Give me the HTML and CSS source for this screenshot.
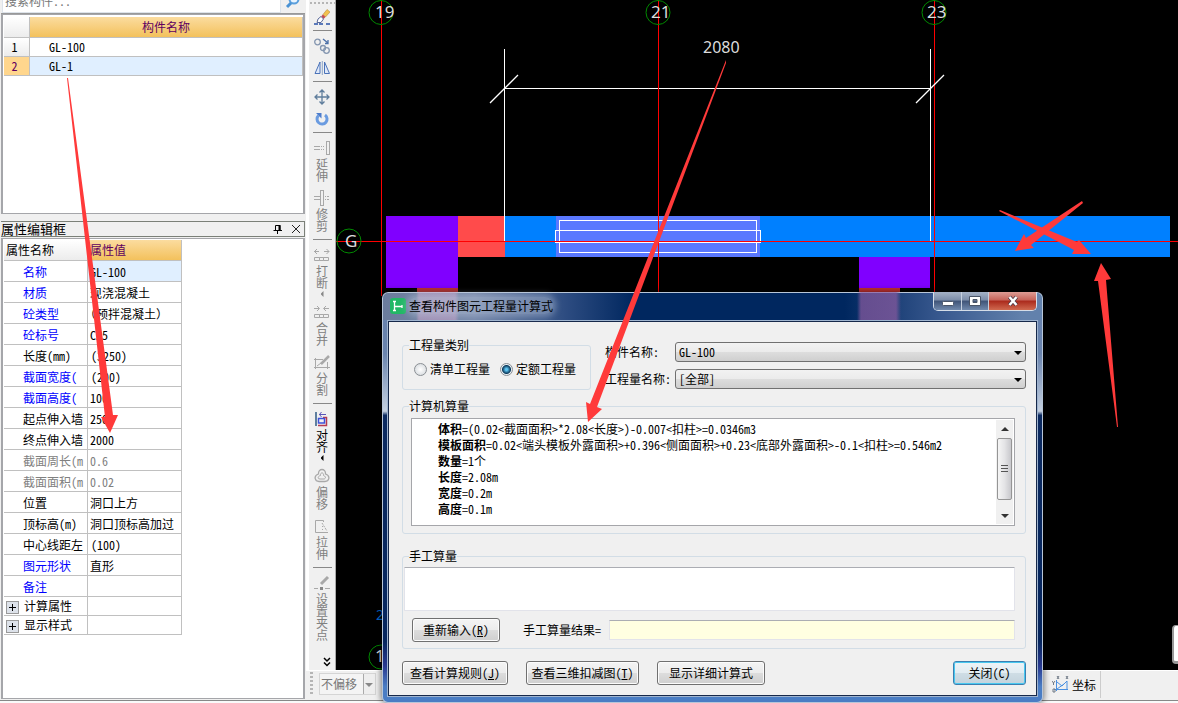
FILE: index.html
```html
<!DOCTYPE html>
<html lang="zh-CN">
<head>
<meta charset="utf-8">
<title>构件图元工程量</title>
<link rel="stylesheet" href="styles.css">
</head>
<body>
<div class="app">
  <aside class="side">
    <div class="search">
      <input class="search-input" type="text" placeholder="搜索构件..." aria-label="搜索构件">
      <button class="search-btn" type="button" aria-label="搜索">
        <svg width="16" height="16" viewBox="0 0 16 16"><circle cx="9" cy="6" r="4.5" fill="#e8f4ff" stroke="#5a9fdc" stroke-width="2"/><path d="M6 10 L2 14" stroke="#4a92d4" stroke-width="3"/></svg>
      </button>
    </div>
    <div class="list-box">
      <table class="members">
        <thead><tr><th class="num"></th><th class="gold">构件名称</th></tr></thead>
        <tbody>
          <tr><td class="num">1</td><td>GL-100</td></tr>
          <tr class="picked"><td class="num">2</td><td>GL-1</td></tr>
        </tbody>
      </table>
    </div>
    <div class="panel-title">
      <h2>属性编辑框</h2>
      <button type="button" aria-label="固定"><svg width="10" height="10" viewBox="0 0 10 10"><path d="M2.500 6 V1.500 H7 V6 M0.500 6.500 H9 M4.500 7 V10" fill="none" stroke="#000"/><path d="M6.500 1 V6" stroke="#000" stroke-width="2"/></svg></button>
      <button type="button" aria-label="关闭面板"><svg width="10" height="10" viewBox="0 0 10 10"><path d="M1 1 L9 9 M9 1 L1 9" fill="none" stroke="#222"/></svg></button>
    </div>
    <div class="props-box">
      <table class="props">
        <thead><tr><th class="name">属性名称</th><th class="gold">属性值</th></tr></thead>
        <tbody>
          <tr class="key picked"><td>名称</td><td>GL-100</td></tr>
          <tr class="key"><td>材质</td><td>现浇混凝土</td></tr>
          <tr class="key"><td>砼类型</td><td class="wide-paren">（预拌混凝土）</td></tr>
          <tr class="key"><td>砼标号</td><td>C25</td></tr>
          <tr><td>长度(mm)</td><td class="paren">(3250)</td></tr>
          <tr class="key"><td>截面宽度(</td><td class="paren">(200)</td></tr>
          <tr class="key"><td>截面高度(</td><td>100</td></tr>
          <tr><td>起点伸入墙</td><td>250</td></tr>
          <tr><td>终点伸入墙</td><td>2000</td></tr>
          <tr class="dim"><td>截面周长(m</td><td>0.6</td></tr>
          <tr class="dim"><td>截面面积(m</td><td>0.02</td></tr>
          <tr><td>位置</td><td>洞口上方</td></tr>
          <tr><td>顶标高(m)</td><td>洞口顶标高加过</td></tr>
          <tr><td>中心线距左</td><td class="paren">(100)</td></tr>
          <tr class="key"><td>图元形状</td><td>直形</td></tr>
          <tr class="key"><td>备注</td><td></td></tr>
          <tr class="fold"><td><button type="button" aria-label="展开计算属性"></button>计算属性</td><td></td></tr>
          <tr class="fold"><td><button type="button" aria-label="展开显示样式"></button>显示样式</td><td></td></tr>
        </tbody>
      </table>
    </div>
  </aside>

  <nav class="tools" aria-label="修改工具">
    <div class="grip"></div>
    <button type="button" aria-label="格式刷"><svg width="16" height="16" viewBox="0 0 16 16"><path d="M9 5.500 L13 .5 L16 3 L11.500 8Z" fill="#f2c14e" stroke="#b98b3c" stroke-width=".6"/><path d="M7 7.500 L9 5.500 L11.500 8 L9.500 10Z" fill="#c44a52"/><path d="M4 10 L7 7.500 L9.500 10 L7 13.500 L3 13.500Z" fill="#fff" stroke="#5b6a9a"/><path d="M0 15 H4 M5 15 H9 M12 15 H16" stroke="#5b7aba" stroke-width="2"/></svg></button>
    <hr>
    <button type="button" aria-label="复制"><svg width="16" height="16" viewBox="0 0 16 16" fill="none" stroke="#8496b0" stroke-width="1.300"><circle cx="3.500" cy="4" r="2.800"/><circle cx="9" cy="10" r="2.500"/><circle cx="12.500" cy="12.500" r="2.800"/><path d="M9 1 L14 5 M14 2 V5.500 H11" stroke="#4a6fa8"/></svg></button>
    <button type="button" aria-label="镜像"><svg width="16" height="16" viewBox="0 0 16 16" fill="#dfe9fa" stroke="#4a72b8"><path d="M6 2 V13.500 H1Z M10.500 2 V13.500 H15.500Z"/><path d="M8.300 1 V15" stroke="#8ea5c8"/></svg></button>
    <hr>
    <button type="button" aria-label="移动"><svg width="16" height="16" viewBox="0 0 16 16" fill="none" stroke="#5f7d9c" stroke-width="1.300"><path d="M8 1 V15 M1 8 H15 M5.500 3.500 L8 1 L10.500 3.500 M5.500 12.500 L8 15 L10.500 12.500 M3.500 5.500 L1 8 L3.500 10.500 M12.500 5.500 L15 8 L12.500 10.500"/></svg></button>
    <button type="button" aria-label="旋转"><svg width="16" height="16" viewBox="0 0 16 16" fill="none"><path d="M4.500 4.500 A5 5 0 1 0 11 4" stroke="#6a9be0" stroke-width="3"/><path d="M2 2 H7.500 V7.500Z" fill="#4c7ccc"/></svg></button>
    <hr>
    <button type="button" class="off"><svg width="16" height="16" viewBox="0 0 16 16" fill="none" stroke="#a8a8a8"><path d="M0 6.500 H6 M0 9.500 H6 M7 6.500 H8 M9 6.500 H10 M7 9.500 H8 M9 9.500 H10"/><rect x="12.500" y="1.500" width="3" height="13"/></svg><span>延伸</span></button>
    <button type="button" class="off"><svg width="16" height="16" viewBox="0 0 16 16" fill="none" stroke="#a8a8a8"><path d="M0 6.500 H6 M0 9.500 H6 M11 6.500 H12 M13 6.500 H15 M11 9.500 H12 M13 9.500 H15"/><path d="M6.500 0 V15.500 M9.500 0 V15.500 M6 .5 H10 M6 15.500 H10"/></svg><span>修剪</span></button>
    <hr>
    <button type="button" class="off"><svg width="16" height="16" viewBox="0 0 16 16" fill="none" stroke="#a8a8a8"><path d="M0 4.500 H5 M3 2 L.5 4.500 L3 7 M10 4.500 H15 M12.500 2 L15 4.500 L12.500 7"/><path d="M.5 10.500 H5.500 V13.500 H.5Z M5.500 10.500 H9.500 V13.500 H5.500Z M9.500 10.500 H14.500 V13.500 H9.500Z"/></svg><span>打断</span><i class="more"></i></button>
    <button type="button" class="off"><svg width="16" height="16" viewBox="0 0 16 16" fill="none" stroke="#a8a8a8"><path d="M0 4.500 H5 M3 2 L5.500 4.500 L3 7 M10 4.500 H15 M12 2 L9.500 4.500 L12 7"/><path d="M.5 10.500 H5.500 V13.500 H.5Z M5.500 10.500 H9.500 V13.500 H5.500Z M9.500 10.500 H14.500 V13.500 H9.500Z"/></svg><span>合并</span></button>
    <button type="button" class="off"><svg width="16" height="16" viewBox="0 0 16 16" fill="none" stroke="#a8a8a8"><path d="M0 5.500 H9 M0 13.500 H16 M1.500 4 V15 M13.500 8 V15"/><path d="M7 10 L15 2" stroke-width="2.500"/><path d="M3 12 L7 9"/></svg><span>分割</span></button>
    <hr>
    <button type="button"><svg width="16" height="16" viewBox="0 0 16 16" fill="none"><path d="M2 1 V15" stroke="#5e7f9f" stroke-width="2"/><path d="M5 3.500 H12 M7.500 1 L5.500 3.500 L7.500 6" stroke="#5a55b8"/><path d="M9 6.500 H12.500 V14.500 H4" stroke="#b43a50" stroke-width="1.500"/><rect x="4.500" y="7.500" width="6" height="4.500" stroke="#3c50d8" stroke-width="1.500"/></svg><span>对齐</span><i class="more"></i></button>
    <button type="button" class="off"><svg width="16" height="16" viewBox="0 0 16 16" fill="none" stroke="#a8a8a8"><path d="M4.500 6 C4 0 12 0 11.500 6 C17 8 15 13.500 11 13.500 H5 C1 13.500 -1 8 4.500 6Z" stroke-width="1.300"/><path d="M6.500 7.500 C6 4 10 4 9.500 7.500 C13 9 11 11 10 11 H6 C3 11 4 8 6.500 7.500Z"/></svg><span>偏移</span></button>
    <button type="button" class="off"><svg width="16" height="16" viewBox="0 0 16 16" fill="none" stroke="#a8a8a8"><path d="M9.500 4 V2.500 H1.500 V14.500 H14"/><path d="M8 5 L13 13" stroke-dasharray="2 1"/><path d="M8.500 8 V13" stroke-dasharray="1 2"/></svg><span>拉伸</span></button>
    <hr>
    <button type="button" class="off"><svg width="16" height="16" viewBox="0 0 16 16" fill="none" stroke="#a8a8a8"><path d="M7 9 L14 2" stroke-width="3"/><path d="M0 13.500 H4 M11 13.500 H16"/><rect x="6" y="12" width="3" height="3" fill="#888" stroke="none"/></svg><span>设置夹点</span></button>
    <button type="button" class="expand" aria-label="更多工具"><svg width="8" height="10" viewBox="0 0 8 10" fill="none" stroke="#000" stroke-width="1.500"><path d="M1 1 L4 4 L7 1 M1 5.500 L4 8.500 L7 5.500"/></svg></button>
  </nav>

  <main class="canvas">
    <svg class="drawing" width="100%" height="100%">
      <g shape-rendering="crispEdges">
        <rect x="50" y="216" width="72" height="72" fill="#8000ff"/>
        <rect x="122" y="216" width="47" height="41" fill="#ff4b4b"/>
        <rect x="169" y="216" width="665" height="41" fill="#0080ff"/>
        <rect x="220" y="216" width="204" height="41" fill="#5a78ff"/>
        <rect x="523" y="257" width="71" height="31" fill="#8000ff"/>
        <rect x="81" y="288" width="41" height="4" fill="#c83232"/>
        <rect x="523" y="288" width="41" height="4" fill="#c83232"/>
        <g fill="none" stroke="#fff">
          <rect x="223.500" y="220.500" width="197" height="32"/>
          <rect x="219.500" y="230.500" width="205" height="12"/>
          <path d="M168.500 49 V242 M594.500 49 V242 M168 88.500 H595"/>
        </g>
        <path d="M45.500 0 V296 M322.500 0 V296 M598.500 0 V296 M0 241.500 H842" stroke="#f00"/>
      </g>
      <path d="M154 103 L182 75 M580 103 L608 75" stroke="#fff" stroke-width="1.300"/>
      <g fill="none" stroke="#008a00">
        <circle cx="45" cy="12.500" r="12"/><circle cx="322" cy="12.500" r="12"/><circle cx="598" cy="12.500" r="12"/><circle cx="13" cy="241" r="12"/><circle cx="45" cy="657" r="12"/>
      </g>
      <g class="axis">
        <text x="39" y="18">19</text><text x="315" y="18">21</text><text x="591" y="18">23</text><text x="9" y="247">G</text><text x="39" y="662">1</text>
        <text class="len" x="367" y="53">2080</text><text class="blue" x="40" y="620">2</text>
      </g>
    </svg>
    <div class="float-tab"></div>
  </main>

  <footer class="bottom">
    <div class="grip-v"></div>
    <div class="mini-select"><select aria-label="偏移方式" disabled><option>不偏移</option></select></div>
    <button class="coord" type="button"><svg width="17" height="17" viewBox="0 0 17 17" fill="none" stroke="#4a90e0"><path d="M4.500 4 V15 M2 13.500 H16 M5 6 L10 10 L15 5 V14 M5 13 L12 8" /><path d="M5 0 L7 3 M7 0 L5 3 M14 0 L16 3 M16 0 L14 3 M0 5 L1.500 7 L3 5 M1.500 7 V9 M1 13 H3 V16 H1Z" stroke="#707a86"/></svg>坐标</button>
  </footer>
  <div class="status"></div>
</div>

<section class="dialog" role="dialog" aria-labelledby="dlg-title">
  <header class="titlebar">
    <svg class="logo" width="16" height="16" viewBox="0 0 16 16"><rect width="16" height="16" rx="3" fill="#22b866"/><path d="M4.500 3.500 V12.500 M3 3.500 H6 M3 12.500 H6 M5 8.500 H12 M12 7 V10" fill="none" stroke="#fff" stroke-width="1.300"/></svg>
    <h1 id="dlg-title">查看构件图元工程量计算式</h1>
    <div class="winbtns">
      <button type="button" aria-label="最小化"><svg width="12" height="12" viewBox="0 0 12 12"><rect x=".5" y="6.500" width="11" height="4" rx="1" fill="#fff" stroke="#4a5568"/></svg></button>
      <button type="button" aria-label="最大化"><svg width="12" height="12" viewBox="0 0 12 12"><path d="M.5 1.500 H11.500 V10.500 H.5Z M4 4.500 V7.500 H8 V4.500Z" fill="#fff" fill-rule="evenodd" stroke="#4a5568"/></svg></button>
      <button class="x" type="button" aria-label="关闭窗口"><svg width="12" height="12" viewBox="0 0 12 12"><path d="M2.500 2 L9.500 10 M9.500 2 L2.500 10" stroke="#4a3a48" stroke-width="4"/><path d="M2.500 2 L9.500 10 M9.500 2 L2.500 10" stroke="#fff" stroke-width="2.500"/></svg></button>
    </div>
  </header>
  <form class="client">
    <div class="top">
      <fieldset class="kind">
        <legend>工程量类别</legend>
        <label><input type="radio" name="kind">清单工程量</label>
        <label><input type="radio" name="kind" checked>定额工程量</label>
      </fieldset>
      <div class="picks">
        <label for="member">构件名称:</label>
        <div class="drop"><select id="member"><option>GL-100</option></select></div>
        <label for="quantity">工程量名称:</label>
        <div class="drop"><select id="quantity"><option>[全部]</option></select></div>
      </div>
    </div>
    <fieldset class="auto">
      <legend>计算机算量</legend>
      <div class="result">
        <div class="lines">
          <p><b>体积</b>=(0.02&lt;截面面积&gt;*2.08&lt;长度&gt;)-0.007&lt;扣柱&gt;=0.0346m3</p>
          <p><b>模板面积</b>=0.02&lt;端头模板外露面积&gt;+0.396&lt;侧面面积&gt;+0.23&lt;底部外露面积&gt;-0.1&lt;扣柱&gt;=0.546m2</p>
          <p><b>数量</b>=1个</p>
          <p><b>长度</b>=2.08m</p>
          <p><b>宽度</b>=0.2m</p>
          <p><b>高度</b>=0.1m</p>
        </div>
        <div class="scroll">
          <i class="up"></i>
          <div class="thumb"></div>
          <i class="down"></i>
        </div>
      </div>
    </fieldset>
    <fieldset class="manual">
      <legend>手工算量</legend>
      <textarea aria-label="手工算量"></textarea>
      <div class="manual-row">
        <button class="btn" type="button">重新输入(<u>R</u>)</button>
        <label for="manual-result">手工算量结果=</label>
        <input id="manual-result" type="text" readonly>
      </div>
    </fieldset>
    <div class="actions">
      <button class="btn rules" type="button">查看计算规则(<u>J</u>)</button>
      <button class="btn solid" type="button">查看三维扣减图(<u>T</u>)</button>
      <button class="btn detail" type="button">显示详细计算式</button>
      <button class="btn close" type="button">关闭(C)</button>
    </div>
  </form>
</section>

<svg class="arrows" width="100%" height="100%" fill="#ff3a3a" aria-hidden="true">
  <path d="M67 78 L68 78 L113 415 L118 415 L110 433 L101 417 L105 417Z"/>
  <path d="M726 60 L726 63 L597 407 L602 409 L588 422 L586 402 L590 404Z"/>
  <path d="M1082 201 L1083 203 L1031 245 L1034 248 L1015 251 L1024 234 L1026 238Z"/>
  <path d="M999 211 L1000 210 L1077 242 L1079 240 L1091 254 L1072 254 L1074 250Z"/>
  <path d="M1118 427 L1117 427 L1098 281 L1094 281 L1101 263 L1111 279 L1106 280Z"/>
</svg>
</body>
</html>
```
FILE: styles.css
```css
* { box-sizing: border-box; }
body, button, input, select, textarea {
  font: 12px/16px "Noto Sans Mono CJK SC", "Noto Sans CJK SC", "Liberation Sans", sans-serif;
  color: #000;
}
body { margin: 0; height: 100vh; overflow: hidden; background: #f0f0f0; position: relative; }
button { padding: 0; border: 0; background: none; }
svg { display: block; }
h1, h2, p { margin: 0; font-size: 12px; font-weight: 400; }

.app {
  height: 100%;
  display: grid;
  grid-template-columns: 306px 30px 1fr;
  grid-template-rows: 1fr 30px 3px;
}

/* left side */
.side { grid-row: 1 / 3; display: flex; flex-direction: column; min-height: 0; }
.search { height: 13px; display: flex; align-items: flex-end; overflow: hidden; flex: none; padding-left: 2px; }
.search-input { width: 279px; height: 26px; border: 1px solid #dde3ea; padding: 0 2px; background: #fff; }
.search-input::placeholder { color: #777; opacity: 1; }
.search-btn { margin-left: 4px; padding-bottom: 5px; height: 20px; align-self: flex-end; }
.list-box { border: 1px solid #a5a6aa; border-width: 1px 2px 1px 2px; background: #fff; height: 200px; margin: 1px 1px 0 1px; padding: 2px 1px; flex: none; box-shadow: 0 -1px #999; }
table { border-collapse: separate; border-spacing: 0; table-layout: fixed; }
th, td { padding: 0; font-weight: 400; text-align: left; white-space: nowrap; overflow: hidden; border-right: 1px solid #c0c0c0; border-bottom: 1px solid #c0c0c0; }
th { background: linear-gradient(#fff, #ececec); }
th.gold { background: linear-gradient(#fbdc9f, #f3c15c); color: #600060; }
.picked td:last-child { background: #e0efff; }
.members { width: 299px; }
.members th { height: 21px; }
.members th.gold { text-align: center; }
.members td { height: 19px; padding-left: 19px; line-height: 14px; }
.members .num { width: 26px; padding: 0 4px 0 0; text-align: center; background: linear-gradient(#fff, #ececec); }
.members .picked .num { background: #ffd68d; color: #600060; }
.panel-title { display: flex; align-items: center; height: 16px; margin: 7px 1px 1px; border: 1px solid #7b8078; border-left: 0; flex: none; }
.panel-title h2 { flex: 1; line-height: 14px; font-size: 13px; }
.panel-title button { margin-right: 3px; margin-left: 5px; }
.props-box { flex: 1; border: 1px solid #a5a6aa; border-width: 1px 2px; background: #fff; margin: 0 1px 1px; padding: 1px 1px; min-height: 0; }
.props { width: 178px; }
.props th { height: 21px; padding-left: 2px; }
.props .name { width: 84px; }
.props td { height: 21px; padding-left: 19px; line-height: 15px; }
.props td:last-child { padding-left: 2px; }
.props td.paren { padding-left: 3px; }
.props td.wide-paren { padding-left: 0; text-indent: -4px; }
.key td:first-child { color: #00f; }
.dim td { color: #808080; }
.props .fold td { height: 19px; }
.props .fold td:first-child { padding-left: 2px; }
.fold button {
  width: 13px; height: 13px; margin-right: 5px; vertical-align: -2px; border: 1px solid #999;
  background: linear-gradient(#000, #000) 50% 50% / 7px 1px no-repeat, linear-gradient(#000, #000) 50% 50% / 1px 7px no-repeat, #dde2ea;
}

/* tool strip */
.tools { display: flex; flex-direction: column; align-items: center; min-height: 0; border-left: 3px solid #fff; border-right: 1px solid #aaa; background: #f0f0f0; padding-top: 2px; position: relative; }
.grip { width: 25px; height: 2px; margin-bottom: 2px; background: repeating-linear-gradient(90deg, #b5b5b5 0 2px, #f0f0f0 2px 4px); flex: none; }
.tools hr { width: 19px; height: 1px; border: 0; background: #888; margin: 2px 0 4px; flex: none; }
.tools button { padding: 3px 0; flex: none; }
.tools span { display: block; width: 12px; margin: 2px auto; line-height: 12px; font-size: 12px; word-break: break-all; }
.tools .off span { color: #808080; }
.more { display: block; width: 3px; height: 6px; margin: 0 auto 1px; background: currentColor; clip-path: polygon(100% 0, 0 50%, 100% 100%); }
.off .more { background: #888; }
.tools .expand { margin: auto 0 0 10px; padding-bottom: 3px; }

/* drawing area */
.canvas { background: #000; position: relative; overflow: hidden; min-width: 0; min-height: 0; }
.drawing { position: absolute; inset: 0; }
.axis text { font: 400 17px "Noto Sans", sans-serif; fill: #dcdcdc; }
.axis .len { font-size: 16px; }
.axis .blue { fill: #0068d0; font-size: 14px; }
.float-tab { position: absolute; right: 0; bottom: 6px; width: 6px; height: 39px; border: 1px solid #999; border-width: 1px 0 3px 2px; border-radius: 4px 0 0 4px; background: #fff; }

/* bottom strips */
.bottom { grid-column: 2 / 4; display: flex; align-items: flex-start; background: #f0f0f0; border-top: 1px solid #fff; padding-left: 4px; }
.grip-v { width: 3px; height: 24px; margin-top: 1px; background: repeating-linear-gradient(#b5b5b5 0 2px, #f0f0f0 2px 4px); }
.mini-select { width: 57px; height: 22px; margin: 2px 0 0 6px; border: 1px solid #d5d5d5; position: relative; background: linear-gradient(90deg, #f4f4f4 43px, #aaa 43px 44px, #eee 44px); }
.mini-select select { appearance: none; display: block; width: 100%; height: 20px; border: 0; padding: 0 0 1px 1px; background: none; color: #777; opacity: 1; }
.mini-select::after { content: ""; position: absolute; right: 2px; top: 9px; border: 4px solid transparent; border-top-color: #888; border-bottom: 0; }
.coord { display: flex; align-items: center; gap: 3px; height: 27px; margin-left: 676px; padding-right: 4px; border-right: 1px solid #ccc; }
.status { grid-column: 1 / 4; background: #fafafa; border-top: 1px solid #888; }

/* calculation window */
.dialog {
  position: absolute; left: 382px; top: 292px; width: 661px; padding: 0 6px 7px 6px;
  border-radius: 6px; box-shadow: inset 0 0 0 1px #b8c6d8, 0 0 6px 1px rgba(0, 0, 0, .5);
  background:
    linear-gradient(90deg, #6b7c9c, #7486a8 14%, #2c4b80 28%, #00275f 38%, #00275f 70%, #3a5a90 85%, #6281ac 97%) 0 0 / 100% 28px no-repeat,
    linear-gradient(#6681ad, #6a84ae 15%, #c4d0e0 29%, #0c2a60 30%, #06265e 85%, #2a3a90 91%, #4a7dc4 96%);
}
.titlebar { height: 29px; display: flex; align-items: flex-start; border-radius: 6px 6px 0 0; background: linear-gradient(90deg, transparent 28px, rgba(208, 160, 200, .5) 31px 67px, transparent 71px, transparent 469px, rgba(140, 90, 160, .7) 473px 508px, transparent 513px); }
.logo { margin: 6px 0 0 2px; }
.titlebar h1 { margin: 5px 0 0 3px; line-height: 17px; border-radius: 8px; background: rgba(190, 203, 222, .4); box-shadow: 0 0 6px 3px rgba(190, 203, 222, .4); }
.winbtns { margin-left: auto; display: flex; height: 19px; border: 1px solid #d5dde8; border-top: 0; border-radius: 0 0 5px 5px; overflow: hidden; }
.winbtns button { width: 28px; display: grid; place-items: center; border-right: 1px solid #c5cfdd; background: linear-gradient(#a5b2c6, #7b8ca8 45%, #3f5478 50%, #7189ac); }
.winbtns button + button { width: 27px; }
.winbtns button.x { width: 47px; border-right: 0; background: linear-gradient(#dd9c94, #c56258 45%, #ab2a1c 50%, #d06a50); }
.client { border: 1px solid #16284a; background: #f0f0f0; padding: 16px 10px 10px 13px; box-shadow: 0 0 0 1px #9fb4cf; }
fieldset { margin: 0; min-width: 0; border: 1px solid #d2dde6; border-radius: 3px; }
legend { height: 14px; line-height: 13px; padding: 0; margin-left: 6px; }
.top { display: flex; gap: 14px; }
.kind { width: 189px; height: 52px; padding: 9px 0 0 10px; display: flex; gap: 9px; }
.kind legend { margin-left: -4px; }
.kind label { display: flex; align-items: center; height: 16px; }
.kind input { appearance: none; width: 13px; height: 13px; margin: 0 3px 0 1px; border: 1px solid #8a8f94; border-radius: 50%; background: radial-gradient(#fff, #cfd4d8); }
.kind input:checked { background: radial-gradient(circle, #5cc3f0 0 1px, #0b3a5c 4px, #e8eef2 5px); }
.picks { flex: 1; display: grid; grid-template-columns: 70px 1fr; grid-auto-rows: 20px; row-gap: 7px; align-items: center; padding-top: 4px; }
.drop { position: relative; height: 20px; }
.drop select { appearance: none; display: block; width: 100%; height: 20px; padding: 0 3px; border: 1px solid #707070; border-radius: 3px; background: linear-gradient(#f2f2f2, #ebebeb 50%, #dddddd 51%, #cfcfcf); }
.drop::after { content: ""; position: absolute; right: 4px; top: 9px; border: 4px solid transparent; border-top-color: #000; border-bottom: 0; }
.auto { margin-top: 9px; padding: 5px 10px 7px 8px; }
.auto legend { margin-left: -2px; }
.result { display: flex; height: 108px; border: 1px solid #a5a6aa; background: #fff; padding: 1px; }
.lines { flex: 1; padding: 1px 0 0 25px; white-space: nowrap; }
.scroll { width: 17px; display: flex; flex-direction: column; align-items: center; background: #f0f0f0; }
.up, .down { border: 4px solid transparent; }
.up { border-bottom-color: #333; border-top: 0; margin-top: 7px; }
.down { border-top-color: #333; border-bottom: 0; margin-top: 14px; }
.thumb { width: 15px; height: 62px; margin-top: 7px; border: 1px solid #959595; border-radius: 2px; background: repeating-linear-gradient(#555 0 1px, transparent 1px 3px) 3px 26px / 7px 8px no-repeat, linear-gradient(90deg, #f5f5f5, #e4e4e6 50%, #c8c8cc); }
.manual { margin-top: 15px; padding: 4px 10px 6px 1px; }
.manual legend { margin-left: 5px; }
.manual textarea { display: block; width: 100%; height: 44px; resize: none; border: 1px solid #e2e3ea; border-top-color: #abadb3; border-radius: 1px; background: #fff; }
.manual-row { display: flex; align-items: center; margin: 7px 0 0 8px; }
.manual-row .btn { width: 88px; }
.manual-row label { width: 86px; margin-left: 23px; }
.manual-row input { flex: 1; min-width: 0; height: 20px; border: 1px solid #e2e3ea; border-top-color: #abadb3; background: #ffffe1; }
.btn { height: 24px; border: 1px solid #707070; border-radius: 3px; background: linear-gradient(#f4f4f4, #ececec 48%, #dddddd 50%, #cfcfcf); box-shadow: inset 0 0 0 1px #fcfcfc; }
.actions { display: flex; gap: 18px; margin-top: 12px; }
.rules { width: 106px; }
.solid { width: 113px; }
.detail { width: 108px; }
.close { width: 73px; margin-left: auto; border-color: #3c7fb1; box-shadow: inset 0 0 0 1px #48c8f0; background: linear-gradient(#edf3f7, #e2ecf2 48%, #cfdde5 50%, #c3d3dd); }

.arrows { position: absolute; inset: 0; pointer-events: none; }
```
